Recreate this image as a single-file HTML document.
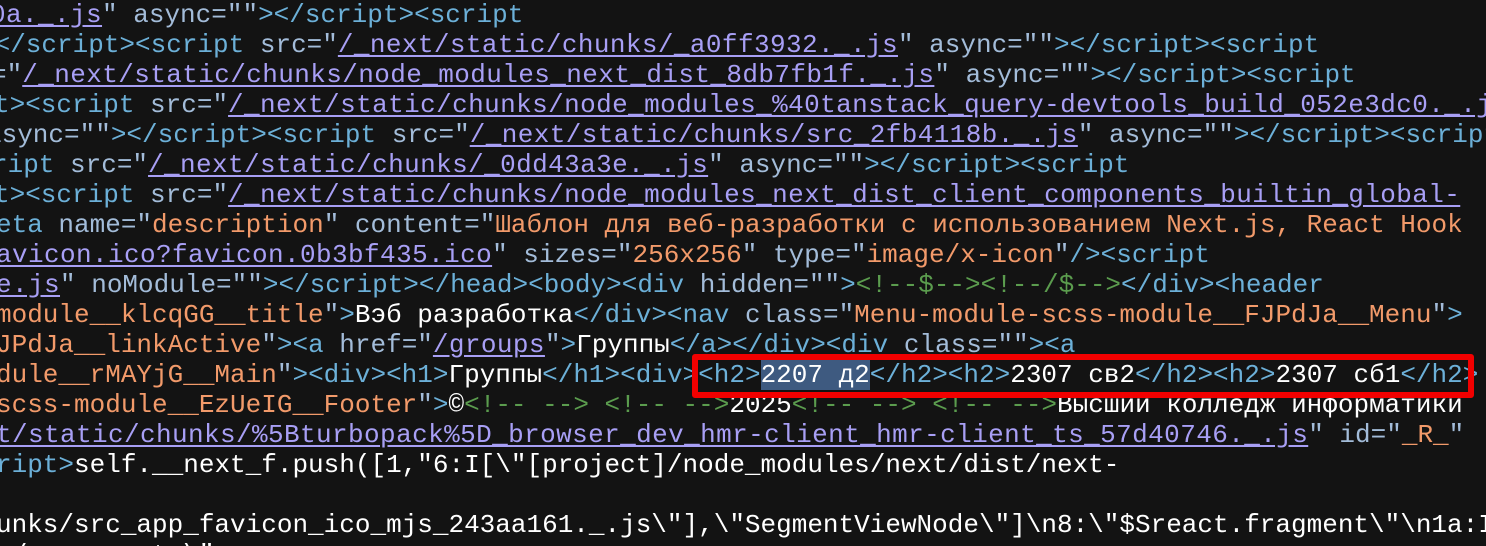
<!DOCTYPE html>
<html><head><meta charset="utf-8"><style>
html,body{margin:0;padding:0;background:#131313;width:1486px;height:546px;overflow:hidden}
.w{position:relative;font-family:"Liberation Mono","DejaVu Sans Mono",monospace;font-size:26px;line-height:30px;color:#fff}
.l{height:30px;position:relative;white-space:pre;margin-left:-4px}
.t{color:#6cb0d8}.a{color:#a3bcd9}.v{color:#f29a6a}.k{color:#a89ff5;text-decoration:underline;text-underline-offset:3px;letter-spacing:0.4px}
.c{color:#5b9c4e}.h{background:#3e5a80}
.box{position:absolute;left:692px;top:354px;width:770px;height:32px;border:6px solid #f20000;border-radius:3px}
</style></head><body><div class="w"><div class="l" style="margin-left:-10px"><span class="k">0a._.js</span><span class="a">" async=""</span><span class="t">&gt;&lt;/script&gt;&lt;script</span></div><div class="l" style="margin-left:-21px"><span class="t">&gt;&lt;/script&gt;&lt;script </span><span class="a">src="</span><span class="k">/_next/static/chunks/_a0ff3932._.js</span><span class="a">" async=""</span><span class="t">&gt;&lt;/script&gt;&lt;script</span></div><div class="l" style="margin-left:-9px"><span class="a">="</span><span class="k">/_next/static/chunks/node_modules_next_dist_8db7fb1f._.js</span><span class="a">" async=""</span><span class="t">&gt;&lt;/script&gt;&lt;script</span></div><div class="l" style="margin-left:-6px"><span class="t">t&gt;&lt;script </span><span class="a">src="</span><span class="k">/_next/static/chunks/node_modules_%40tanstack_query-devtools_build_052e3dc0._.js</span><span class="a">"</span></div><div class="l" style="margin-left:-14px"><span class="a">async=""</span><span class="t">&gt;&lt;/script&gt;&lt;script </span><span class="a">src="</span><span class="k">/_next/static/chunks/src_2fb4118b._.js</span><span class="a">" async=""</span><span class="t">&gt;&lt;/script&gt;&lt;script</span></div><div class="l" style="margin-left:-8px"><span class="t">ript </span><span class="a">src="</span><span class="k">/_next/static/chunks/_0dd43a3e._.js</span><span class="a">" async=""</span><span class="t">&gt;&lt;/script&gt;&lt;script</span></div><div class="l" style="margin-left:-6px"><span class="t">t&gt;&lt;script </span><span class="a">src="</span><span class="k">/_next/static/chunks/node_modules_next_dist_client_components_builtin_global-</span></div><div class="l"><span class="t">eta </span><span class="a">name="</span><span class="v">description</span><span class="a">" content="</span><span class="v">Шаблон для веб-разработки с использованием Next.js, React Hook</span></div><div class="l"><span class="k">avicon.ico?favicon.0b3bf435.ico</span><span class="a">" sizes="</span><span class="v">256x256</span><span class="a">" type="</span><span class="v">image/x-icon</span><span class="a">"</span><span class="t">/&gt;&lt;script</span></div><div class="l"><span class="k">e.js</span><span class="a">" noModule=""</span><span class="t">&gt;&lt;/script&gt;&lt;/head&gt;&lt;body&gt;&lt;div </span><span class="a">hidden=""</span><span class="t">&gt;</span><span class="c">&lt;!--$--&gt;&lt;!--/$--&gt;</span><span class="t">&lt;/div&gt;&lt;header</span></div><div class="l"><span class="v">module__klcqGG__title</span><span class="a">"</span><span class="t">&gt;</span>Вэб разработка<span class="t">&lt;/div&gt;&lt;nav </span><span class="a">class="</span><span class="v">Menu-module-scss-module__FJPdJa__Menu</span><span class="a">"</span><span class="t">&gt;</span></div><div class="l"><span class="v">JPdJa__linkActive</span><span class="a">"</span><span class="t">&gt;&lt;a </span><span class="a">href="</span><span class="k">/groups</span><span class="a">"</span><span class="t">&gt;</span>Группы<span class="t">&lt;/a&gt;&lt;/div&gt;&lt;div </span><span class="a">class=""</span><span class="t">&gt;&lt;a</span></div><div class="l"><span class="v">dule__rMAYjG__Main</span><span class="a">"</span><span class="t">&gt;&lt;div&gt;&lt;h1&gt;</span>Группы<span class="t">&lt;/h1&gt;&lt;div&gt;&lt;h2&gt;</span><span class="h">2207 д2</span><span class="t">&lt;/h2&gt;&lt;h2&gt;</span>2307 св2<span class="t">&lt;/h2&gt;&lt;h2&gt;</span>2307 сб1<span class="t">&lt;/h2&gt;</span></div><div class="l"><span class="v">scss-module__EzUeIG__Footer</span><span class="a">"</span><span class="t">&gt;</span>©<span class="c">&lt;!-- --&gt; &lt;!-- --&gt;</span>2025<span class="c">&lt;!-- --&gt; &lt;!-- --&gt;</span>Высший колледж информатики</div><div class="l"><span class="k">t/static/chunks/%5Bturbopack%5D_browser_dev_hmr-client_hmr-client_ts_57d40746._.js</span><span class="a">" id="</span><span class="v">_R_</span><span class="a">"</span></div><div class="l"><span class="t">ript&gt;</span>self.__next_f.push([1,"6:I[\"[project]/node_modules/next/dist/next-</div><div class="l"></div><div class="l">unks/src_app_favicon_ico_mjs_243aa161._.js\"],\"SegmentViewNode\"]\n8:\"$Sreact.fragment\"\n1a:I</div><div class="l">r/components\"</div><div class="box"></div></div></body></html>
